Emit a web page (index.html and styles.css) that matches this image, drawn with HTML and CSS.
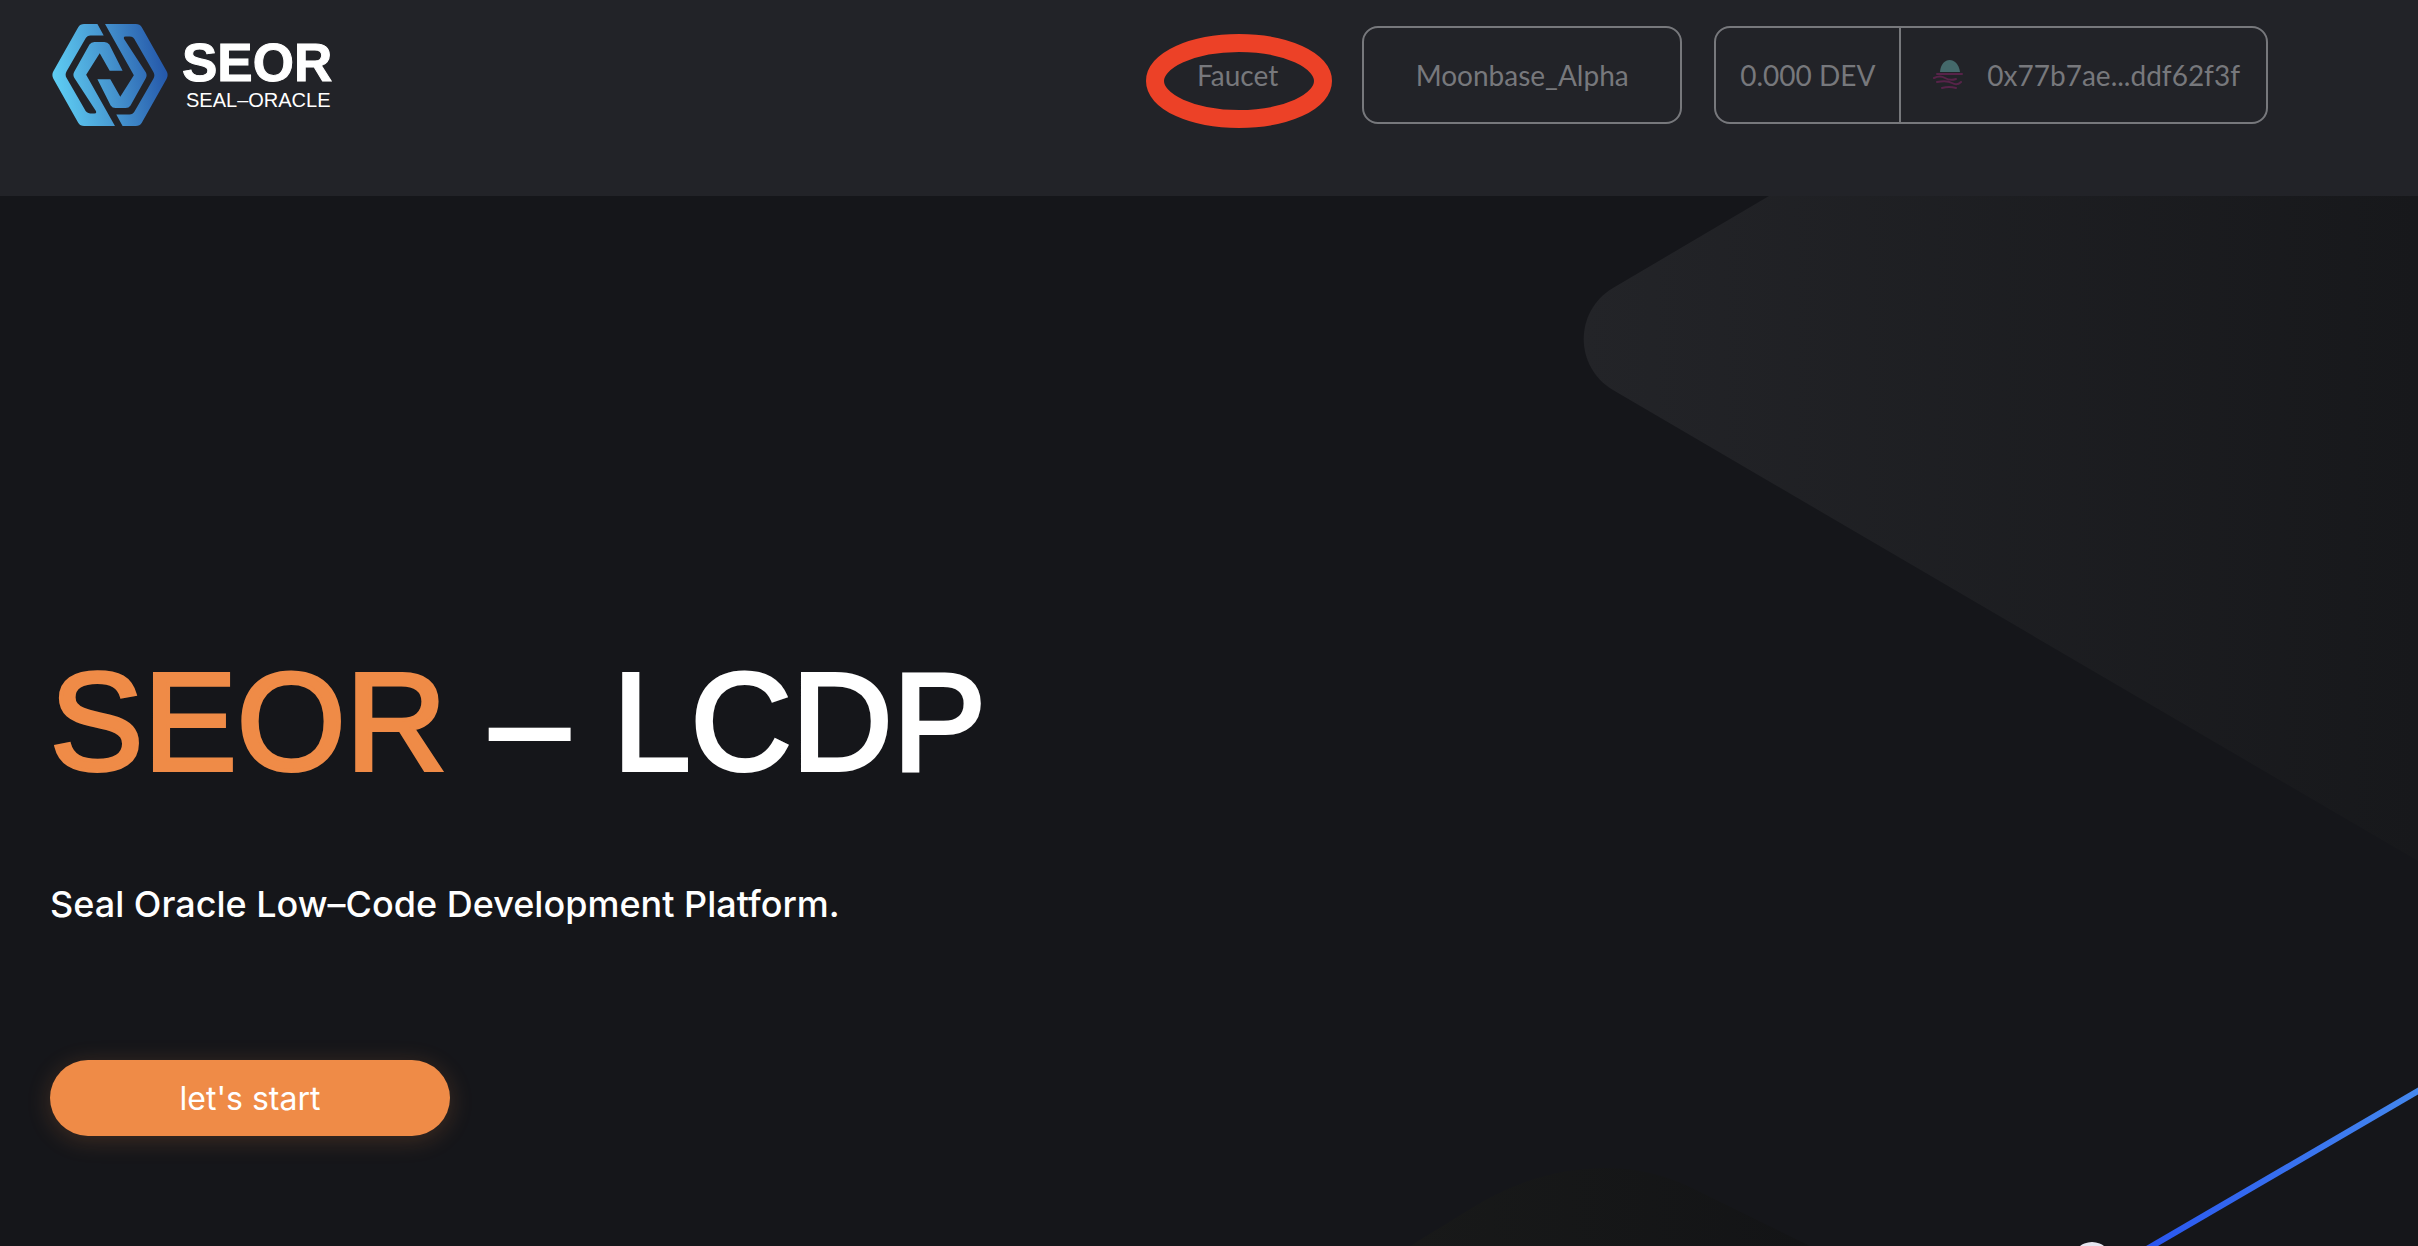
FILE: index.html
```html
<!DOCTYPE html>
<html lang="en">
<head>
  <meta charset="UTF-8" />
  <meta name="viewport" content="width=device-width, initial-scale=1.0" />
  <title>SEOR - LCDP</title>
  <link rel="stylesheet" href="styles.css">
</head>
<body>
<header class="header">
  <a class="logo" href="#">
    <svg class="logo-mark" viewBox="0 0 350 308" aria-hidden="true">
      <defs>
        <linearGradient id="mark" gradientUnits="userSpaceOnUse" x1="0" y1="190" x2="350" y2="130">
          <stop offset="0" stop-color="#5fd0f5" />
          <stop offset="0.5" stop-color="#4695cf" />
          <stop offset="1" stop-color="#2355a8" />
        </linearGradient>
      </defs>
      <g fill="url(#mark)">
        <path d="M97 0H137L156 35H116Q106 35 101 44L44 143Q38 153 44 163L98 257Q104 270 115 270H128Q136 270 132 262L67 162Q62 153 67 144L113 62Q118 54 128 54H158Q168 54 173 62L213 141H174L144 88L103 153L190 308H97Q85 308 79 298L4 165Q-2 154 4 143L79 10Q85 0 97 0Z" />
        <path d="M253 308H213L194 273H234Q244 273 249 264L306 165Q312 155 306 145L252 51Q246 38 235 38H222Q214 38 218 46L283 146Q288 155 283 164L237 246Q232 254 222 254H192Q182 254 177 246L137 167H176L206 220L247 155L160 0H253Q265 0 271 10L346 143Q352 154 346 165L271 298Q265 308 253 308Z" />
      </g>
    </svg>
    <span class="logo-text">
      <span class="logo-name">SEOR</span>
      <span class="logo-sub">SEAL–ORACLE</span>
    </span>
  </a>
  <nav class="nav">
    <a class="faucet" href="#">Faucet
      <svg class="faucet-ring" viewBox="0 0 186 94" aria-hidden="true">
        <ellipse cx="93" cy="47" rx="84" ry="38" fill="none" stroke="#ec4127" stroke-width="18" />
      </svg>
    </a>
    <button class="network" type="button">Moonbase_Alpha</button>
    <div class="wallet">
      <span class="balance">0.000 DEV</span>
      <button class="account" type="button">
        <svg class="avatar" viewBox="0 0 32 32" aria-hidden="true">
          <path d="M7 13C8 -3 25 -3 27 13Z" fill="#44696b" />
          <g fill="none" stroke="#572349" stroke-width="2" stroke-linecap="round">
            <path d="M4 15H29M1 19Q7 16 12 19T23 20M4 23Q14 21 19 24T28 23M9 29Q16 27 23 29" />
          </g>
        </svg>
        0x77b7ae...ddf62f3f
      </button>
    </div>
  </nav>
</header>
<main class="hero">
  <svg class="scene" viewBox="0 0 1018 1050" aria-hidden="true">
    <defs>
      <linearGradient id="wedge" x1="0" x2="1">
        <stop offset="0" stop-color="#232428" />
        <stop offset="1" stop-color="#17181b" />
      </linearGradient>
      <linearGradient id="beam" gradientUnits="userSpaceOnUse" x1="750" y1="1050" x2="1018" y2="895">
        <stop offset="0" stop-color="#2a57f0" />
        <stop offset="1" stop-color="#4488ee" />
      </linearGradient>
      <linearGradient id="hill" x1="0" x2="1">
        <stop offset="0" stop-color="#181919" />
        <stop offset="1" stop-color="#131416" />
      </linearGradient>
    </defs>
    <path d="M369 0L213 92C174 115 174 171 213 194L1018 665V0Z" fill="url(#wedge)" />
    <path d="M10 1050L80 1007Q140 972 207 972Q255 972 300 996L410 1050Z" fill="url(#hill)" />
    <path d="M740 1057L1030 888" stroke="url(#beam)" stroke-width="6" />
    <circle cx="692" cy="1066" r="20" fill="#e6e6f0" />
  </svg>
  <div class="intro">
    <h1 class="title"><span class="brand">SEOR</span> <span>–</span> <span>LCDP</span></h1>
    <p class="sub-title">Seal Oracle Low–Code Development Platform.</p>
    <button class="start" type="button">let's start</button>
  </div>
</main>
</body>
</html>
```
FILE: styles.css
```css
* {
  box-sizing: border-box;
}
body {
  margin: 0;
  min-height: 100vh;
  display: flex;
  flex-direction: column;
  background: #15161a;
  color: #fff;
  font-family: Inter, sans-serif;
}
button {
  font: inherit;
  color: inherit;
  background: none;
  border: none;
  cursor: pointer;
}
a {
  color: inherit;
  text-decoration: none;
}
.header {
  height: 196px;
  padding: 24px 150px 0 52px;
  display: flex;
  justify-content: space-between;
  align-items: flex-start;
  background: #222328;
}
.logo {
  display: flex;
  align-items: center;
  gap: 14px;
  font-family: "Liberation Sans", sans-serif;
}
.logo-mark {
  width: 116px;
  height: 102px;
}
.logo-text {
  display: flex;
  flex-direction: column;
}
.logo-name {
  font-size: 53px;
  line-height: 50px;
  font-weight: 700;
  -webkit-text-stroke: 1px #fff;
}
.logo-sub {
  font-size: 20px;
  line-height: 24px;
  padding-left: 4px;
}
.nav {
  display: flex;
  align-items: center;
  padding-top: 2px;
  gap: 32px;
  color: #77787c;
  font-family: Lato, sans-serif;
  font-size: 28px;
}
.faucet {
  position: relative;
  padding: 0 52px;
}
.faucet-ring {
  position: absolute;
  top: 50%;
  left: 50%;
  width: 186px;
  height: 94px;
  margin: -41px 0 0 -92px;
}
.network {
  width: 320px;
  height: 98px;
  border: 2px solid #77787c;
  border-radius: 16px;
}
.wallet {
  height: 98px;
  display: flex;
  border: 2px solid #77787c;
  border-radius: 16px;
}
.balance {
  display: flex;
  align-items: center;
  padding: 0 24px;
  border-right: 2px solid #77787c;
}
.account {
  display: flex;
  align-items: center;
  gap: 22px;
  padding: 0 26px 0 32px;
}
.avatar {
  width: 32px;
  height: 32px;
}
.hero {
  flex: 1;
  position: relative;
  overflow: hidden;
  padding: 442px 50px 0;
}
.scene {
  position: absolute;
  top: 0;
  right: 0;
  height: 100%;
}
.intro {
  position: relative;
}
.title {
  display: flex;
  gap: 44px;
  margin: 0;
  font-family: "Liberation Sans", sans-serif;
  font-size: 140px;
  line-height: 168px;
  font-weight: 400;
  -webkit-text-stroke: 4px currentColor;
}
.brand {
  color: #ef8b47;
}
.sub-title {
  margin: 74px 0 0;
  font-size: 36px;
  line-height: 48px;
  font-weight: 500;
}
.start {
  width: 400px;
  height: 76px;
  margin-top: 132px;
  border-radius: 38px;
  background: #ef8b47;
  box-shadow: 0 4px 24px rgba(240, 140, 72, 0.2);
  font-size: 32px;
}
```
